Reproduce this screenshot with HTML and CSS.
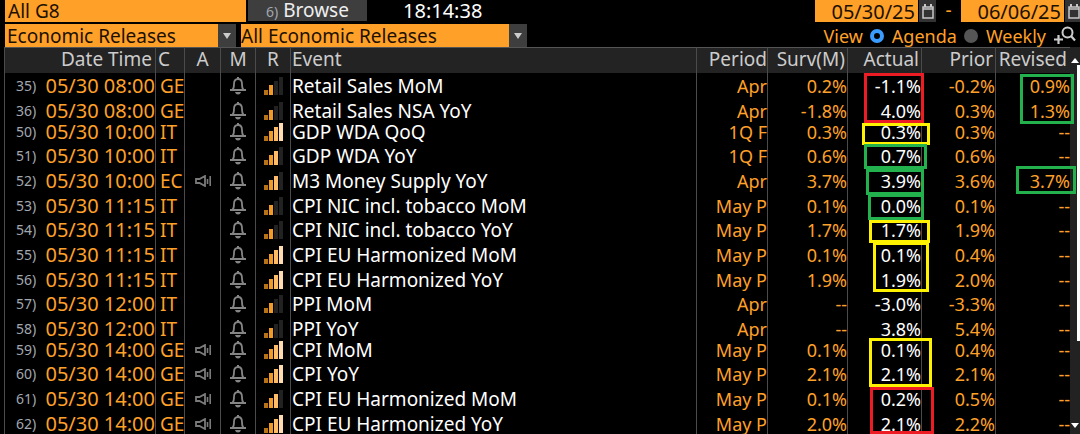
FILE: index.html
```html
<!DOCTYPE html>
<html lang="en">
  <head>
    <meta charset="utf-8">
    <title>Economic Releases</title>
    <link rel="stylesheet" href="styles.css">
  </head>
  <body>
    <!-- shared icons -->
    <svg class="sprite" aria-hidden="true">
      <symbol id="bell" viewBox="0 0 16 18">
        <path d="M0 13h16M2.500 13c1.500-1.500 1.500-3 1.500-6C4 3.500 5.500 2 8 2s4 1.500 4 5c0 3 0 4.500 1.500 6" fill="none" stroke="#858585" stroke-width="1.800"/>
        <path d="M7 0h2v2H7zM5 15h6c-.5 1.700-1.500 2.500-3 2.500s-2.500-.8-3-2.500z" fill="#858585"/>
      </symbol>
      <symbol id="speaker" viewBox="0 0 16 12">
        <path d="M1 4h3.500L10 1v10L4.500 8H1z" fill="none" stroke="#7a7a7a" stroke-width="1.800"/>
        <path d="M12.500 4v5M15.200 1v10" stroke="#7a7a7a" stroke-width="1.600"/>
      </symbol>
      <symbol id="calendar" viewBox="0 0 12 15">
        <path d="M1 3h10v11H1zM1 5h10" fill="none" stroke="#c8c8c8" stroke-width="1.500"/>
        <path d="M3 0v3M9 0v3" stroke="#c8c8c8" stroke-width="2"/>
      </symbol>
    </svg>

    <div class="bar">
      <input class="field region" type="text" value="All G8" aria-label="Region">
      <button class="browse" type="button"><span class="key">6)</span> Browse</button>
      <time class="clock">18:14:38</time>
      <div class="dates">
        <input class="field date" type="text" value="05/30/25" aria-label="From date">
        <button class="cal" type="button" aria-label="Pick from date"><svg><use href="#calendar"/></svg></button>
        <span class="dash">-</span>
        <input class="field date" type="text" value="06/06/25" aria-label="To date">
        <button class="cal" type="button" aria-label="Pick to date"><svg><use href="#calendar"/></svg></button>
      </div>
    </div>

    <div class="bar filters">
      <div class="dropdown category">
        <select class="field" aria-label="Category"><option>Economic Releases</option></select>
      </div>
      <div class="dropdown releases">
        <select class="field" aria-label="Releases"><option>All Economic Releases</option></select>
      </div>
      <div class="view">
        <span>View</span>
        <input type="radio" name="view" id="agenda" checked>
        <label for="agenda">Agenda</label>
        <input type="radio" name="view" id="weekly">
        <label for="weekly">Weekly</label>
        <button class="zoom" type="button" aria-label="Zoom in">
          <svg viewBox="0 0 22 20"><circle cx="13.500" cy="6.500" r="5" fill="none" stroke="#ccc" stroke-width="2"/><path d="M17 10l4 4.500M0 13.500h9M4.500 9v9" stroke="#ccc" stroke-width="2.200"/></svg>
        </button>
      </div>
    </div>

    <div class="grid">
      <table>
        <colgroup>
          <col class="c-num"><col class="c-date"><col class="c-country"><col class="c-alert"><col class="c-bell"><col class="c-rel"><col>
          <col class="c-period"><col class="c-surv"><col class="c-actual"><col class="c-prior"><col class="c-revised">
        </colgroup>
        <thead>
          <tr>
            <th class="right" colspan="2">Date Time</th><th class="country">C</th><th>A</th><th>M</th><th>R</th><th class="event">Event</th>
            <th class="right">Period</th><th class="right head">Surv(M)</th><th class="right head">Actual</th><th class="right head">Prior</th><th class="right">Revised</th>
          </tr>
        </thead>
        <tbody id="rows"></tbody>
      </table>
      <div class="scroll"><div class="thumb"></div></div>

      <!-- highlights drawn over the figures -->
      <div class="mark red m1"></div>
      <div class="mark yellow m2"></div>
      <div class="mark green m3"></div>
      <div class="mark green m4"></div>
      <div class="mark green m5"></div>
      <div class="mark yellow m6"></div>
      <div class="mark yellow m7"></div>
      <div class="mark yellow m8"></div>
      <div class="mark red m9"></div>
      <div class="mark green m10"></div>
      <div class="mark green m11"></div>
    </div>
    <script src="script.js"></script>
  </body>
</html>
```
FILE: styles.css
```css
* {
  box-sizing: border-box;
}
body {
  margin: 0;
  height: 100vh;
  overflow: hidden;
  display: flex;
  flex-direction: column;
  background: #000;
  color: #ffa028;
  font: 19px/20px "Noto Sans", sans-serif;
}
.sprite {
  display: none;
}
input, select, button {
  margin: 0;
  padding: 0;
  border: 0;
  border-radius: 0;
  font: inherit;
}

/* top bars */
.bar {
  display: flex;
  flex: none;
  height: 22px;
  padding-left: 5px;
}
.filters {
  height: 23px;
  margin: 2px 0 0;
}
.field {
  background: #ffa028;
  color: #1c1000;
  height: 100%;
}
.region {
  width: 241px;
  padding-left: 3px;
}
.browse {
  width: 119px;
  height: 21px;
  margin-left: 2px;
  background: #3e3e3e;
  color: #eee;
}
.key {
  font-size: 14px;
  color: #a0a8b0;
}
.clock {
  margin-left: 36px;
  color: #fff;
  font-size: 20px;
  line-height: 22px;
}
.dates {
  display: flex;
  margin: 0 -2px 0 auto;
}
.date {
  width: 103px;
  padding-right: 3px;
  font-size: 20px;
  text-align: right;
}
.cal {
  width: 17px;
  margin-left: 1px;
  background: #333;
}
.cal svg {
  display: block;
  width: 12px;
  height: 15px;
  margin: 0 auto;
}
.dash {
  width: 25px;
  text-align: center;
}
.dropdown {
  position: relative;
  margin-right: 5px;
}
.dropdown select {
  appearance: none;
  width: 100%;
  padding-left: 2px;
}
.category {
  width: 231px;
}
.releases {
  width: 286px;
}
.releases select {
  padding-left: 0;
}
.dropdown::before {
  content: "";
  position: absolute;
  right: 0;
  width: 18px;
  height: 100%;
  background: #3e3e3e;
  pointer-events: none;
}
.dropdown::after {
  content: "";
  position: absolute;
  right: 5px;
  top: 9px;
  border: 4px solid transparent;
  border-top: 6px solid #ccc;
  border-bottom: 0;
  pointer-events: none;
}
.view {
  display: flex;
  align-items: center;
  margin-left: auto;
  padding-right: 4px;
  font-size: 18px;
}
.view input {
  appearance: none;
  width: 14px;
  height: 14px;
  margin: 0 8px 0 7px;
  border-radius: 50%;
  background: #555;
}
.view input:checked {
  background: #000;
  border: 4px solid #3b9cff;
}
.zoom {
  margin-left: 8px;
  background: none;
}
.zoom svg {
  display: block;
  width: 22px;
  height: 20px;
}

/* releases table */
.grid {
  position: relative;
  display: flex;
  flex: 1;
  padding-left: 4px;
  overflow: hidden;
}
table {
  flex: 1;
  align-self: flex-start;
  table-layout: fixed;
  width: 100%;
  border-collapse: separate;
  border-spacing: 0;
  border-left: 1px solid #4b4b4b;
}
th, td {
  padding: 0 0 3px;
  border-right: 1px solid #4b4b4b;
  line-height: 18px;
  white-space: nowrap;
  vertical-align: bottom;
}
th {
  height: 26px;
  padding-bottom: 5px;
  border-top: 1px solid #555;
  background: #232323;
  color: #ccc;
  font-weight: normal;
}
th:last-child, td:last-child, td.num {
  border-right: 0;
}
td {
  height: 25px;
}
.short td {
  height: 24px;
}
.tight td {
  height: 21px;
}
.c-num { width: 33px; }
.c-date { width: 118px; }
.c-country { width: 29px; }
.c-alert { width: 36px; }
.c-bell { width: 35px; }
.c-rel { width: 35px; }
.c-period { width: 71px; }
.c-surv { width: 80px; }
.c-actual { width: 74px; }
.c-prior { width: 74px; }
.c-revised { width: 74px; }
td.num {
  padding-left: 11px;
  color: #a0a8b0;
  font-size: 14px;
}
td.when {
  font-size: 20px;
}
td.figure {
  font-size: 18px;
}
.right {
  text-align: right;
}
.head {
  padding-right: 2px;
}
th.right:first-child, th:last-child {
  padding-right: 3px;
}
.country {
  padding-left: 4px;
  text-align: left;
}
th.country {
  padding-left: 2px;
}
.event {
  padding-left: 1px;
  text-align: left;
}
td.event, .actual {
  color: #fff;
}
.icon svg {
  display: block;
  margin: 0 auto;
}
.bell {
  width: 16px;
  height: 18px;
}
.speaker {
  width: 16px;
  height: 12px;
}
td.alert {
  padding-bottom: 6px;
}
.bars {
  display: flex;
  align-items: flex-end;
  justify-content: center;
  gap: 1px;
  height: 18px;
}
.bars i {
  width: 4px;
  background: #222;
}
.bars i:nth-child(1) { height: 5px; }
.bars i:nth-child(2) { height: 10px; }
.bars i:nth-child(3) { height: 14px; }
.bars i:nth-child(4) { height: 18px; }
.bars i.on:nth-child(1) { background: #b87218; }
.bars i.on:nth-child(2) { background: #f29a28; }
.bars i.on:nth-child(3) { background: #ffbc68; }
.bars i.on:nth-child(4) { background: #ffdcb0; }

.scroll {
  position: relative;
  flex: none;
  width: 10px;
  background: #222;
}
.thumb {
  width: 3px;
  height: 276px;
  margin: 18px 0 0 auto;
  background: #fff;
}
.scroll::before, .scroll::after {
  content: "";
  position: absolute;
  left: 1px;
  border: 4px solid transparent;
}
.scroll::before {
  top: 11px;
  border-bottom: 5px solid #fff;
  border-top: 0;
}
.scroll::after {
  bottom: 6px;
  border-top: 5px solid #fff;
  border-bottom: 0;
}

/* highlight boxes */
.mark {
  position: absolute;
  border: 3px solid;
}
.red { border-color: #ed1c24; }
.yellow { border-color: #fff200; }
.green { border-color: #22b14c; }
.m1 { right: 156px; top: 26px; width: 60px; height: 50px; }
.m2 { right: 150px; top: 76px; width: 68px; height: 22px; }
.m3 { right: 153px; top: 97px; width: 63px; height: 25px; }
.m4 { right: 156px; top: 122px; width: 58px; height: 26px; }
.m5 { right: 156px; top: 147px; width: 56px; height: 26px; }
.m6 { right: 150px; top: 173px; width: 61px; height: 23px; }
.m7 { right: 151px; top: 195px; width: 56px; height: 50px; }
.m8 { right: 148px; top: 291px; width: 63px; height: 49px; }
.m9 { right: 146px; top: 340px; width: 64px; height: 47px; }
.m10 { right: 6px; top: 27px; width: 54px; height: 50px; }
.m11 { right: 4px; top: 119px; width: 60px; height: 28px; }
```
FILE: script.js
```js
// num, date, country, alert, relevance, event, period, survey, actual, prior, revised, row height
const releases = [
  [35, "05/30 08:00", "GE", 0, 2, "Retail Sales MoM", "Apr", "0.2%", "-1.1%", "-0.2%", "0.9%", ""],
  [36, "05/30 08:00", "GE", 0, 2, "Retail Sales NSA YoY", "Apr", "-1.8%", "4.0%", "0.3%", "1.3%", ""],
  [50, "05/30 10:00", "IT", 0, 4, "GDP WDA QoQ", "1Q F", "0.3%", "0.3%", "0.3%", "--", "tight"],
  [51, "05/30 10:00", "IT", 0, 3, "GDP WDA YoY", "1Q F", "0.6%", "0.7%", "0.6%", "--", "short"],
  [52, "05/30 10:00", "EC", 1, 3, "M3 Money Supply YoY", "Apr", "3.7%", "3.9%", "3.6%", "3.7%", ""],
  [53, "05/30 11:15", "IT", 0, 2, "CPI NIC incl. tobacco MoM", "May P", "0.1%", "0.0%", "0.1%", "--", ""],
  [54, "05/30 11:15", "IT", 0, 2, "CPI NIC incl. tobacco YoY", "May P", "1.7%", "1.7%", "1.9%", "--", "short"],
  [55, "05/30 11:15", "IT", 0, 4, "CPI EU Harmonized MoM", "May P", "0.1%", "0.1%", "0.4%", "--", ""],
  [56, "05/30 11:15", "IT", 0, 4, "CPI EU Harmonized YoY", "May P", "1.9%", "1.9%", "2.0%", "--", ""],
  [57, "05/30 12:00", "IT", 0, 2, "PPI MoM", "Apr", "--", "-3.0%", "-3.3%", "--", "short"],
  [58, "05/30 12:00", "IT", 0, 2, "PPI YoY", "Apr", "--", "3.8%", "5.4%", "--", ""],
  [59, "05/30 14:00", "GE", 1, 4, "CPI MoM", "May P", "0.1%", "0.1%", "0.4%", "--", "tight"],
  [60, "05/30 14:00", "GE", 1, 4, "CPI YoY", "May P", "2.1%", "2.1%", "2.1%", "--", "short"],
  [61, "05/30 14:00", "GE", 1, 3, "CPI EU Harmonized MoM", "May P", "0.1%", "0.2%", "0.5%", "--", ""],
  [62, "05/30 14:00", "GE", 1, 4, "CPI EU Harmonized YoY", "May P", "2.0%", "2.1%", "2.2%", "--", ""]
];

function bars(level) {
  return [1, 2, 3, 4].map(n => `<i class="${n <= level ? "on" : ""}"></i>`).join("");
}

document.getElementById("rows").innerHTML = releases.map(r => `
  <tr class="${r[11]}">
    <td class="num">${r[0]})</td>
    <td class="when right">${r[1]}</td>
    <td class="country">${r[2]}</td>
    <td class="icon alert">${r[3] ? '<svg class="speaker"><use href="#speaker"/></svg>' : ""}</td>
    <td class="icon"><svg class="bell"><use href="#bell"/></svg></td>
    <td><div class="bars">${bars(r[4])}</div></td>
    <td class="event">${r[5]}</td>
    <td class="figure right">${r[6]}</td>
    <td class="figure right">${r[7]}</td>
    <td class="figure right actual">${r[8]}</td>
    <td class="figure right">${r[9]}</td>
    <td class="figure right">${r[10]}</td>
  </tr>`).join("");
```
